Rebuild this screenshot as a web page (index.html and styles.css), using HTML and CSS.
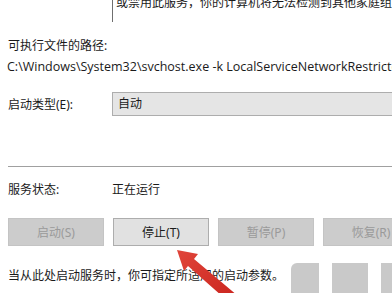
FILE: index.html
```html
<!DOCTYPE html>
<html lang="zh-CN">

<head>
    <meta charset="UTF-8">
    <meta name="viewport" content="width=device-width, initial-scale=1.0">
    <title>服务属性</title>
    <link rel="stylesheet" href="styles.css">
</head>

<body>
    <div class="dialog">
        <div class="desc-box">
            <p>或禁用此服务，你的计算机将无法检测到其他家庭组</p>
        </div>

        <div class="path-label">可执行文件的路径:</div>
        <div class="path">C:\Windows\System32\svchost.exe -k LocalServiceNetworkRestricted</div>

        <div class="field-row">
            <span class="field-label">启动类型(E):</span>
            <div class="combo">自动</div>
        </div>

        <hr class="divider">

        <div class="status-row">
            <span class="field-label">服务状态:</span>
            <span>正在运行</span>
        </div>

        <div class="buttons">
            <button class="btn" disabled>启动(S)</button>
            <button class="btn active">停止(T)</button>
            <button class="btn" disabled>暂停(P)</button>
            <button class="btn" disabled>恢复(R)</button>
        </div>

        <p class="hint">当从此处启动服务时，你可指定所适用的启动参数。</p>
    </div>

    <!-- 底部的按钮残影 -->
    <div class="ghosts">
        <div class="ghost cut"></div>
        <div class="ghost"></div>
        <div class="ghost"></div>
    </div>

    <!-- 红色箭头 -->
    <svg class="arrow" width="392" height="293" viewBox="0 0 392 293">
        <defs>
            <linearGradient id="arrowFill" x1="0" y1="0" x2="1" y2="1">
                <stop offset="0" stop-color="#e0453a" />
                <stop offset="1" stop-color="#c9231d" />
            </linearGradient>
        </defs>
        <polygon fill="url(#arrowFill)"
            points="177,250 198,254 194,259 238,296 231,304 188,266 184,271" />
    </svg>
</body>

</html>
```

FILE: styles.css
```css
body {
    margin: 0;
    padding: 0;
    width: 392px;
    height: 293px;
    overflow: hidden;
    background: #fff;
    color: #1a1a1a;
    font-family: 'Segoe UI', 'Noto Sans', 'Noto Sans CJK SC', sans-serif;
    font-size: 12px;
    position: relative;
}

.dialog {
    padding-left: 8px;
}

/* 描述文本框 */
.desc-box {
    margin-left: 104px;
    height: 22px;
    border-left: 1px solid #6f6f6f;
    overflow: hidden;
}

.desc-box p {
    margin: -5px 0 0 3px;
    white-space: nowrap;
    line-height: 16px;
}

.path-label {
    margin-top: 16px;
    line-height: 16px;
}

.path {
    margin-top: 5px;
    margin-left: -1px;
    line-height: 16px;
    white-space: nowrap;
    font-family: 'Open Sans', 'Noto Sans CJK SC', sans-serif;
    font-size: 12.5px;
}

.field-row {
    display: flex;
    align-items: center;
    margin-top: 17px;
}

.field-label {
    width: 104px;
    flex: none;
}

.combo {
    flex: 1;
    height: 22px;
    line-height: 22px;
    padding-left: 5px;
    background: #e5e5e5;
    border: 1px solid #adadad;
    border-right: none;
}

.divider {
    margin: 50px 0 0;
    border: none;
    border-top: 1px solid #a0a0a0;
    height: 0;
}

.status-row {
    display: flex;
    margin-top: 15px;
    line-height: 16px;
}

/* 按钮 */
.buttons {
    display: flex;
    gap: 9px;
    margin-top: 20px;
    white-space: nowrap;
}

.btn {
    flex: none;
    width: 96px;
    height: 28px;
    padding: 0;
    font-family: inherit;
    font-size: 12px;
    color: #9a9a9a;
    background: #cccccc;
    border: 1px solid #c4c4c4;
}

.btn.active {
    color: #1a1a1a;
    background: #e1e1e1;
    border-color: #adadad;
}

.hint {
    margin: 22px 0 0;
    line-height: 16px;
}

.ghosts {
    position: absolute;
    right: -25px;
    bottom: 0;
    display: flex;
    gap: 13px;
}

.ghost {
    width: 36px;
    height: 30px;
    background: #c9c9c9;
}

.ghost.cut {
    width: 28px;
    border-top-left-radius: 6px;
}

.arrow {
    position: absolute;
    left: 0;
    top: 0;
}
```
